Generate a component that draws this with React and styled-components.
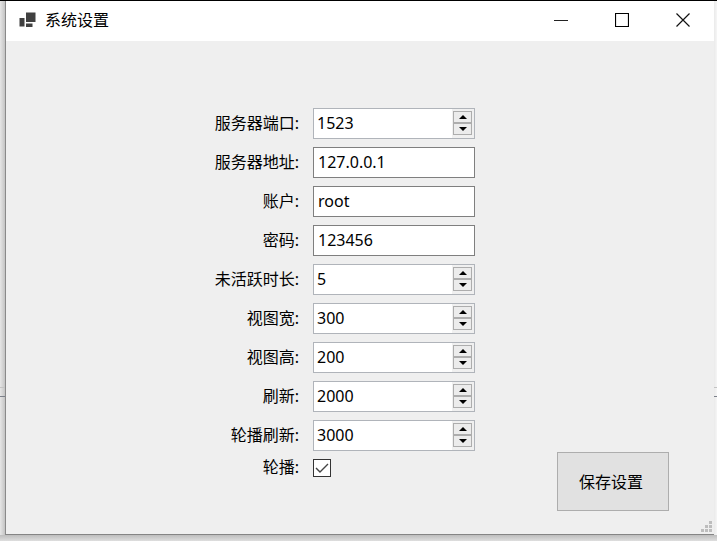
import React, { useState } from 'react';
import styled, { createGlobalStyle } from 'styled-components';

const GlobalStyle = createGlobalStyle`
  * {
    box-sizing: border-box;
  }
  body {
    margin: 0;
    font-family: 'Noto Sans', 'Noto Sans CJK SC', sans-serif;
    font-size: 16px;
    color: #000;
  }
  button, input {
    font: inherit;
    color: inherit;
  }
`;

const Desktop = styled.div`
  display: grid;
  grid-template-columns: 5px minmax(0, 1fr) 3px;
  grid-template-rows: minmax(0, 1fr) 6px;
  min-height: 100vh;
  border-top: 1px solid #000;
  background: #f0f0f0;
`;
/* slices of the window behind, visible on both sides */
const Edge = styled.div`
  background:
    linear-gradient(#7c808a, #7c808a) 0 395px / 100% 1px no-repeat,
    linear-gradient(#c4c4c4, #c4c4c4) 0 386px / 100% 1px no-repeat,
    ${(props) =>
      props.$shadow
        ? 'linear-gradient(90deg, #e6e6e6, #c4c4c4)'
        : 'linear-gradient(90deg, #eaeaea, #f6f6f6)'};
`;
const BottomShadow = styled.div`
  grid-column: 1 / -1;
  background: linear-gradient(#bdbdbd, #dedede);
`;
const Window = styled.main`
  position: relative;
  display: flex;
  flex-direction: column;
  border-left: 1px solid #8a8a8a;
  border-bottom: 1px solid #858585;
  background: #efefef;
`;

const TitleBar = styled.header`
  display: flex;
  align-items: center;
  height: 40px;
  padding: 0 1px 2px 13px;
  background: #fff;
`;
const Title = styled.h1`
  flex: 1;
  margin: 0 0 0 8px;
  font-size: 16px;
  font-weight: 400;
  line-height: 24px;
`;
const CaptionButton = styled.button`
  display: grid;
  place-items: center;
  width: 61px;
  height: 38px;
  padding: 0;
  border: 0;
  background: transparent;
`;

const Form = styled.form`
  flex: 1;
  display: grid;
  grid-template-columns: minmax(0, 293fr) 162px minmax(0, 225fr);
  grid-template-rows: repeat(9, 31px) 18px minmax(0, 1fr);
  gap: 8px 14px;
  padding: 67px 0 23px;
`;
const Label = styled.label`
  grid-column: 1;
  align-self: center;
  padding-bottom: 2px;
  text-align: right;
  line-height: 18px;
  white-space: nowrap;
`;
const TextField = styled.input`
  grid-column: 2;
  width: 100%;
  padding: 0 4px 2px;
  border: 1px solid #7f7f7f;
  border-radius: 0;
  background: #fff;
  outline: none;
`;
const NumberBox = styled.div`
  grid-column: 2;
  display: flex;
  border: 1px solid #b0b4ba;
  background: #fff;
`;
const NumberField = styled.input`
  flex: 1;
  min-width: 0;
  padding: 0 3px 2px;
  border: 0;
  background: transparent;
  outline: none;
  appearance: textfield;
  &::-webkit-inner-spin-button,
  &::-webkit-outer-spin-button {
    appearance: none;
    margin: 0;
  }
`;
const Spinner = styled.div`
  display: flex;
  flex-direction: column;
  width: 22px;
  padding: 2px 2px 3px 1px;
  background: #f0f0f0;
`;
const SpinButton = styled.button`
  flex: 1;
  display: grid;
  place-items: center;
  min-height: 0;
  padding: 0;
  border: 1px solid #adadad;
  background: #ececec;
`;

const CheckWrap = styled.span`
  grid-column: 2;
  display: grid;
  width: 18px;
  height: 18px;
  input,
  svg {
    grid-area: 1 / 1;
  }
  svg {
    pointer-events: none;
  }
  input:not(:checked) + svg {
    visibility: hidden;
  }
`;
const CheckBox = styled.input`
  appearance: none;
  width: 18px;
  height: 18px;
  margin: 0;
  border: 1px solid #333;
  background: #fff;
`;
const SaveButton = styled.button`
  grid-column: 3;
  grid-row: 1 / -1;
  align-self: end;
  justify-self: end;
  width: 112px;
  height: 59px;
  margin-right: 45px;
  padding: 0 4px 2px 0;
  border: 1px solid #adadad;
  background: #e1e1e1;
`;
const Grip = styled.svg`
  position: absolute;
  right: 1px;
  bottom: 1px;
`;

const FIELDS = [
  { id: 'port', label: '服务器端口', type: 'number', value: 1523 },
  { id: 'address', label: '服务器地址', type: 'text', value: '127.0.0.1' },
  { id: 'account', label: '账户', type: 'text', value: 'root' },
  { id: 'password', label: '密码', type: 'text', value: '123456' },
  { id: 'idle', label: '未活跃时长', type: 'number', value: 5 },
  { id: 'viewWidth', label: '视图宽', type: 'number', value: 300 },
  { id: 'viewHeight', label: '视图高', type: 'number', value: 200 },
  { id: 'refresh', label: '刷新', type: 'number', value: 2000 },
  { id: 'carouselRefresh', label: '轮播刷新', type: 'number', value: 3000 },
];

function NumberInput({ id, initial }) {
  const [value, setValue] = useState(initial);
  const step = (delta) => setValue((v) => Number(v) + delta);
  return (
    <NumberBox>
      <NumberField
        id={id}
        type="number"
        value={value}
        onChange={(e) => setValue(e.target.value)}
      />
      <Spinner>
        <SpinButton type="button" aria-label="+" onClick={() => step(1)}>
          <svg width="8" height="4" viewBox="0 0 8 4">
            <path d="M0 4L4 0L8 4Z" />
          </svg>
        </SpinButton>
        <SpinButton type="button" aria-label="-" onClick={() => step(-1)}>
          <svg width="8" height="4" viewBox="0 0 8 4">
            <path d="M0 0L4 4L8 0Z" />
          </svg>
        </SpinButton>
      </Spinner>
    </NumberBox>
  );
}

export default function App() {
  return (
    <>
      <GlobalStyle />
      <Desktop>
        <Edge $shadow />
        <Window>
          <TitleBar>
            <svg width="18" height="16" viewBox="0 0 18 16" fill="#404040">
              <path d="M7 0.5H16.5V10H7ZM0.5 6H5.5V14.5H0.5ZM7 11.5H13.5V15H7Z" />
            </svg>
            <Title>系统设置</Title>
            <CaptionButton type="button" aria-label="最小化">
              <svg width="14" height="14" viewBox="0 0 14 14">
                <path d="M0 7.5H14" stroke="#222" />
              </svg>
            </CaptionButton>
            <CaptionButton type="button" aria-label="最大化">
              <svg width="14" height="14" viewBox="0 0 14 14">
                <path d="M0.5 0.5H13.5V13.5H0.5Z" fill="none" stroke="#000" strokeWidth="1.2" />
              </svg>
            </CaptionButton>
            <CaptionButton type="button" aria-label="关闭">
              <svg width="14" height="14" viewBox="0 0 14 14">
                <path d="M0.5 0.5L13.5 13.5M13.5 0.5L0.5 13.5" stroke="#111" strokeWidth="1.2" />
              </svg>
            </CaptionButton>
          </TitleBar>
          <Form onSubmit={(e) => e.preventDefault()}>
            {FIELDS.map((field) => (
              <React.Fragment key={field.id}>
                <Label htmlFor={field.id}>{field.label}:</Label>
                {field.type === 'number' ? (
                  <NumberInput id={field.id} initial={field.value} />
                ) : (
                  <TextField id={field.id} type="text" defaultValue={field.value} />
                )}
              </React.Fragment>
            ))}
            <Label htmlFor="carousel">轮播:</Label>
            <CheckWrap>
              <CheckBox id="carousel" type="checkbox" defaultChecked />
              <svg width="18" height="18" viewBox="0 0 18 18">
                <path d="M3 9L7 13L15 5" fill="none" stroke="#444" strokeWidth="1.4" />
              </svg>
            </CheckWrap>
            <SaveButton type="submit">保存设置</SaveButton>
          </Form>
          <Grip width="12" height="12" viewBox="0 0 12 12" fill="#bdbdbd">
            <path d="M8 0H11V3H8ZM4 4H7V7H4ZM8 4H11V7H8ZM0 8H3V11H0ZM4 8H7V11H4ZM8 8H11V11H8Z" />
          </Grip>
        </Window>
        <Edge />
        <BottomShadow />
      </Desktop>
    </>
  );
}
